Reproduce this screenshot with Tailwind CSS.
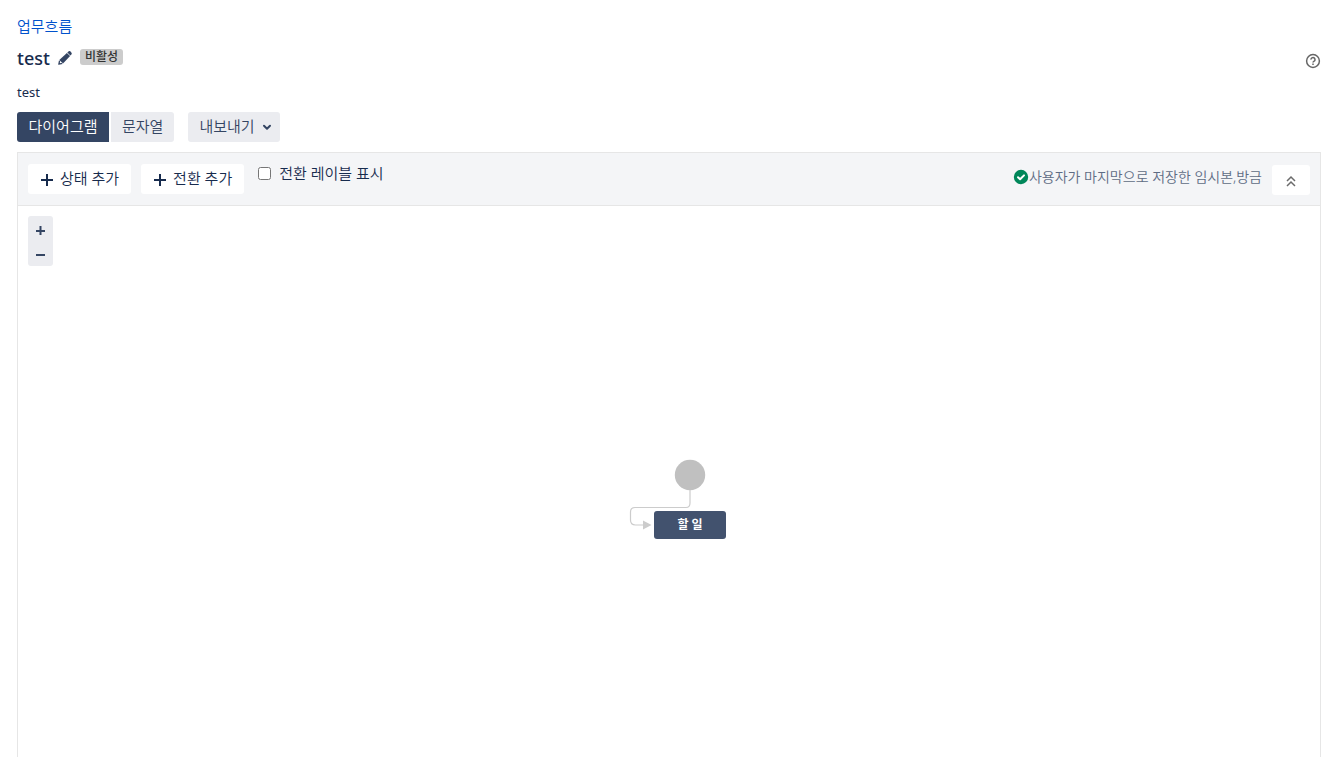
<!DOCTYPE html>
<html lang="ko">
<head>
    <meta charset="UTF-8">
    <meta name="viewport" content="width=device-width, initial-scale=1.0">
    <title>업무흐름 - test</title>
    <script src="https://cdn.jsdelivr.net/npm/@tailwindcss/browser@4"></script>
</head>
<body class="flex min-h-screen flex-col bg-white pt-4 pr-[11px] pl-[17px] font-['Noto_Sans','Noto_Sans_CJK_KR',sans-serif] text-[15px] leading-5 text-[#172b4d]">
    <header>
        <nav>
            <a href="#" class="font-[350] text-[#0052cc] hover:underline">업무흐름</a>
        </nav>
        <div class="mt-2 flex h-7 items-center">
            <h1 class="text-lg font-medium">test</h1>
            <button type="button" aria-label="이름 편집" class="ml-2 text-[#344563]">
                <svg class="block h-[14px] w-[14px]" viewBox="0 0 14 14" fill="currentColor">
                    <path d="M9.3 1.5 10.5.5c.7-.6 1.500-.5 2.100.1l.7.8c.6.6.6 1.300.1 2l-1 1.200z"/>
                    <path d="M8.900 1.900 1.300 9l3.700 3.600 7.100-7.700z"/>
                    <path d="M1 9.300.2 13.200c0 .4.200.6.6.5l3.900-.8-1.200-1.200-1.300.5-.4-.4.4-1.300z"/>
                </svg>
            </button>
            <span class="mb-0.5 ml-2 flex h-4 items-center rounded-[3px] bg-[#ccc] px-[5px] text-xs font-medium text-[#333]">비활성</span>
            <button type="button" aria-label="도움말" class="ml-auto text-[#666]">
                <svg class="mt-1.5 block h-4 w-4" viewBox="0 0 16 16" fill="none" stroke="currentColor" stroke-width="1.5">
                    <circle cx="8" cy="8" r="6.4"/>
                    <path d="M6 6.600a2 2 0 1 1 3.100 1.600c-.7.4-1.100.7-1.100 1.400"/>
                    <path d="M8 10.500V12"/>
                </svg>
            </button>
        </div>
        <p class="mt-2.5 text-[13px]">test</p>
    </header>

    <div class="mt-2.5 flex font-[350] text-[#344563]">
        <button type="button" aria-pressed="true" class="flex h-[30px] min-w-[92px] items-center justify-center rounded-l-[3px] bg-[#344563] px-[11px] pb-0.5 text-white">다이어그램</button>
        <button type="button" aria-pressed="false" class="ml-0.5 flex h-[30px] items-center rounded-r-[3px] bg-[#ebecf0] px-[11px] pb-0.5">문자열</button>
        <button type="button" aria-haspopup="true" class="ml-3.5 flex h-[30px] items-center gap-[7px] rounded-[3px] bg-[#ebecf0] pr-2 pb-0.5 pl-[11px]">내보내기
            <svg class="mt-0.5 w-2.5" viewBox="0 0 10 10" fill="none" stroke="currentColor" stroke-width="2" stroke-linecap="round" stroke-linejoin="round"><path d="M2 3.8 5 6.700l3-2.900"/></svg>
        </button>
    </div>

    <main class="mt-2.5 flex flex-1 flex-col border border-b-0 border-[#e6e6e6]">
        <div class="flex h-[53px] items-start border-b border-[#e6e6e6] bg-[#f4f5f7] px-2.5 pt-[11px] font-[350]">
            <button type="button" class="flex h-[30px] items-center gap-[5px] rounded-[3px] bg-white pr-3 pb-0.5 pl-[11px]">
                <svg class="mt-1 w-4" viewBox="0 0 16 16" fill="none" stroke="currentColor" stroke-width="2"><path d="M8 2v12M2 8h12"/></svg>
                상태 추가
            </button>
            <button type="button" class="ml-2.5 flex h-[30px] items-center gap-[5px] rounded-[3px] bg-white pr-3 pb-0.5 pl-[11px]">
                <svg class="mt-1 w-4" viewBox="0 0 16 16" fill="none" stroke="currentColor" stroke-width="2"><path d="M8 2v12M2 8h12"/></svg>
                전환 추가
            </button>
            <label class="-mt-px ml-3.5 flex items-center gap-2">
                <input type="checkbox" class="h-[13px] w-[13px]">
                전환 레이블 표시
            </label>
            <div class="ml-auto flex h-[26px] items-center text-sm text-[#5e6c84]">
                <svg class="h-4 w-4" viewBox="0 0 16 16">
                    <circle cx="8" cy="8" r="7.2" fill="#00875a"/>
                    <path d="m5 8.200 2.100 2.100L11 6.400" fill="none" stroke="#fff" stroke-width="2" stroke-linecap="round" stroke-linejoin="round"/>
                </svg>
                사용자가 마지막으로 저장한 임시본,방금
            </div>
            <button type="button" aria-label="접기" class="mt-px ml-2.5 flex h-[30px] w-[38px] items-center justify-center rounded-[3px] bg-white text-[#6b6b6b]">
                <svg class="mt-0.5 h-3 w-3" viewBox="0 0 12 12" fill="none" stroke="currentColor" stroke-width="1.5"><path d="m2 6 4-4 4 4M2 11l4-4 4 4"/></svg>
            </button>
        </div>

        <div class="relative min-h-[340px] flex-1">
            <!-- 확대/축소 -->
            <div class="absolute top-2.5 left-2.5 flex w-[25px] flex-col overflow-hidden rounded-[3px] bg-[#ebecf0] text-[#344563]">
                <button type="button" aria-label="확대" class="flex h-[25px] items-center justify-center">
                    <svg class="mt-1 w-[9px]" viewBox="0 0 9 9" fill="none" stroke="currentColor" stroke-width="2"><path d="M4.500 0v9M0 5h9"/></svg>
                </button>
                <button type="button" aria-label="축소" class="flex h-[25px] items-center justify-center">
                    <svg class="mt-1 w-[9px]" viewBox="0 0 9 9" fill="none" stroke="currentColor" stroke-width="2"><path d="M0 4h9"/></svg>
                </button>
            </div>

            <!-- 다이어그램 -->
            <div class="absolute top-[253px] left-[calc(50%-40px)] h-20 w-[97px]">
                <svg class="absolute inset-0" width="97" height="80" viewBox="0 0 97 80">
                    <circle cx="61" cy="16" r="15.2" fill="#c0c0c0"/>
                    <path d="M61 31v13q0 4.500-4 4.500H6q-4.500 0-4.500 4.500v8q0 5 5 5H14" fill="none" stroke="#ccc" stroke-width="1.2"/>
                    <path d="M14 61.500v9l8.500-4.500z" fill="#ccc"/>
                </svg>
                <div class="absolute top-[52px] left-[25px] flex h-7 w-[72px] items-center justify-center rounded-[3px] bg-[#42526e] text-xs font-bold text-white">할 일</div>
            </div>
        </div>
    </main>
</body>
</html>
